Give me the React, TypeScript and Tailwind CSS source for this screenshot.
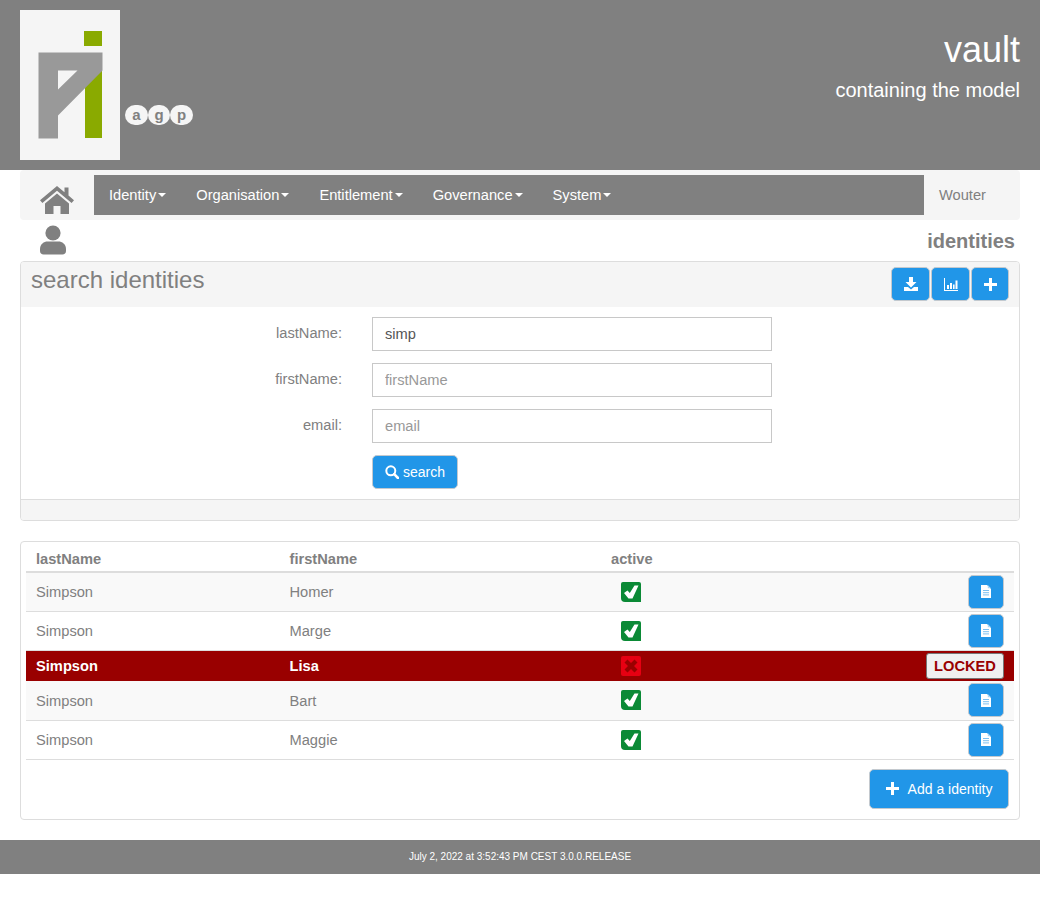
import React from "react";

const blueBtn = "flex items-center justify-center bg-[#2196e8] text-white border border-[#c4c9ce] rounded-[5px]";

const Caret = () => (
  <span className="inline-block ml-[2px] align-middle w-0 h-0 border-x-[4px] border-x-transparent border-t-[4px] border-t-white" />
);

const Home = () => (
  <svg width="34" height="28" viewBox="0 0 34 28" fill="#808080">
    <path d="M17 0 L24.5 6.2 V1.5 H28.5 V9.5 L34 14.2 L31.6 17 L17 4.8 L2.4 17 L0 14.2 Z" />
    <path d="M17 7.5 L29 17.5 V28 H20.5 V20 H13.5 V28 H5 V17.5 Z" />
  </svg>
);

const User = () => (
  <svg width="26" height="30" viewBox="0 0 26 30" fill="#808080">
    <circle cx="13" cy="8" r="7.6" />
    <path d="M0 24 C0 19 4 16.5 7.5 16.5 H18.5 C22 16.5 26 19 26 24 V26 C26 28.2 24.5 29.5 22.5 29.5 H3.5 C1.5 29.5 0 28.2 0 26 Z" />
  </svg>
);

const Doc = () => (
  <svg width="10" height="13" viewBox="0 0 10 13">
    <path d="M0 0 H6 L10 4 V13 H0 Z" fill="#fff" />
    <path d="M6.8 0 L10 3.2 H6.8 Z" fill="#a8d6f6" />
    <path d="M2 5.5 H8 M2 7.7 H8 M2 9.9 H8" stroke="#7cc0f0" strokeWidth="1" />
  </svg>
);

const Check = () => (
  <svg width="20" height="20" viewBox="0 0 20 20">
    <path d="M2 0 H18 Q20 0 20 2 V20 H4 Q0 20 0 16 V2 Q0 0 2 0 Z" fill="#0b8a36" />
    <path d="M3 11 L6.5 8.5 L8.8 11 L13.5 3.5 L17.5 3.5 L11.5 16.5 L7.5 16.5 Z" fill="#fff" />
  </svg>
);

const Cross = () => (
  <svg width="20" height="20" viewBox="0 0 20 20">
    <rect width="20" height="20" rx="2" fill="#e60012" />
    <path d="M3.5 6.5 L6.5 3.5 L10 7 L13.5 3.5 L16.5 6.5 L13 10 L16.5 13.5 L13.5 16.5 L10 13 L6.5 16.5 L3.5 13.5 L7 10 Z" fill="#990000" />
  </svg>
);

const nav = ["Identity", "Organisation", "Entitlement", "Governance", "System"];

const rows = [
  { f: "Homer", s: true },
  { f: "Marge", s: false },
  { f: "Lisa", locked: true },
  { f: "Bart", s: true },
  { f: "Maggie", s: false },
];

const Field = ({ label, value, placeholder }: { label: string; value?: string; placeholder?: string }) => (
  <div className="flex h-[34px] mb-3">
    <label className="w-[321px] text-right text-[#808080] text-[14.667px] leading-[32px]">{label}</label>
    <input
      readOnly
      defaultValue={value}
      placeholder={placeholder}
      className="ml-[30px] w-[400px] h-[34px] border border-[#c8c8c8] px-3 text-[14.667px] text-[#555] placeholder:text-[#999] outline-none bg-white"
    />
  </div>
);

export default function App() {
  return (
    <div className="bg-white min-h-[905px] text-[#808080] font-['Liberation_Sans',Arial,sans-serif] text-[14.667px]">
      <header className="h-[170px] bg-[#808080] flex justify-between pl-5 pr-5 pt-[10px]">
        <div className="flex items-end h-[150px]">
          <div className="w-[100px] h-[150px] bg-[#f5f5f5]">
            <svg width="100" height="150" viewBox="0 0 100 150">
              <rect x="64" y="21" width="18" height="15" fill="#8aaa00" />
              <rect x="65" y="43" width="17" height="85" fill="#8aaa00" />
              <path d="M18.5 42.5 H82.5 V60.5 L38 105.5 V128.5 H18.5 Z M38 60.5 V79.5 L57.5 60.5 Z" fill="#999" fillRule="evenodd" />
            </svg>
          </div>
          <div className="flex ml-[5px] mb-[35px]">
            {["a", "g", "p"].map((c) => (
              <span key={c} className="w-[22.67px] h-5 rounded-full bg-[#f5f5f5] text-[#808080] text-[15px] font-bold leading-5 text-center">{c}</span>
            ))}
          </div>
        </div>
        <div className="text-right text-white">
          <div className="text-[36px] leading-[40px] mt-[20px]">vault</div>
          <div className="text-xl leading-[22px] mt-[9px]">containing the model</div>
        </div>
      </header>

      <main className="px-5">
        <nav className="h-[50px] bg-[#f5f5f5] rounded-[4px] flex items-start">
          <div className="w-[74px] h-[50px] flex items-start justify-center pt-[16px]"><Home /></div>
          <div className="mt-[5px] h-10 w-[830px] bg-[#808080] flex items-center text-white pl-[15px] gap-[30px]">
            {nav.map((n) => (
              <span key={n} className="flex items-center leading-[22px]">{n}<Caret /></span>
            ))}
          </div>
          <div className="ml-[15px] mt-[5px] leading-10">Wouter</div>
        </nav>

        <div className="h-[41px] flex justify-between items-start">
          <div className="ml-[20px] mt-[5px]"><User /></div>
          <div className="text-xl font-bold pr-[5px] mt-[10px] leading-[22px]">identities</div>
        </div>

        <section className="h-[260px] border border-[#ddd] rounded-[4px] overflow-hidden flex flex-col">
          <div className="h-[45px] bg-[#f5f5f5] flex justify-between pl-[10px] pr-[10px] pt-[5px]">
            <h2 className="text-2xl leading-[26px]">search identities</h2>
            <div className="flex gap-px">
              <button className={`${blueBtn} w-[39px] h-[34px]`}>
                <svg width="14" height="14" viewBox="0 0 14 14" fill="#fff"><path d="M5 0 H9 V5 H12.5 L7 10.5 L1.5 5 H5 Z" /><path d="M0 10 H4 L7 12.5 L10 10 H14 V14 H0 Z" /></svg>
              </button>
              <button className={`${blueBtn} w-[39px] h-[34px]`}>
                <svg width="14" height="13" viewBox="0 0 14 13" fill="#fff"><path d="M0 0 H1 V12 H14 V13 H0 Z" /><rect x="3" y="7" width="2" height="4" /><rect x="6" y="5" width="2" height="6" /><rect x="9" y="6.5" width="1.6" height="4.5" /><rect x="11.5" y="2.5" width="2" height="8.5" /></svg>
              </button>
              <button className={`${blueBtn} w-[38px] h-[34px]`}>
                <svg width="13" height="13" viewBox="0 0 13 13" fill="#fff"><path d="M5 0 H8 V5 H13 V8 H8 V13 H5 V8 H0 V5 H5 Z" /></svg>
              </button>
            </div>
          </div>
          <div className="flex-1 pt-[10px]">
            <Field label="lastName:" value="simp" />
            <Field label="firstName:" placeholder="firstName" />
            <Field label="email:" placeholder="email" />
            <div className="pl-[351px]">
              <button className={`${blueBtn} w-[86px] h-[34px] text-sm gap-[4px]`}>
                <svg width="14" height="14" viewBox="0 0 14 14" fill="none" stroke="#fff"><circle cx="5.8" cy="5.8" r="4.5" strokeWidth="2" /><path d="M9.2 9.2 L13 13" strokeWidth="2.6" strokeLinecap="round" /></svg>
                search
              </button>
            </div>
          </div>
          <div className="h-[21px] bg-[#f5f5f5] border-t border-[#ddd]" />
        </section>

        <section className="mt-5 h-[279px] border border-[#ddd] rounded-[4px] px-[5px] pt-[5px]">
          <table className="w-[988px] table-fixed border-collapse">
            <colgroup>
              <col className="w-[253.5px]" />
              <col className="w-[321.5px]" />
              <col className="w-[60px]" />
              <col />
            </colgroup>
            <thead>
              <tr className="h-[25px] border-b-2 border-[#ddd] font-bold text-left">
                <th className="px-[10px]">lastName</th>
                <th className="px-[10px]">firstName</th>
                <th className="px-[10px] whitespace-nowrap">active</th>
                <th />
              </tr>
            </thead>
            <tbody>
              {rows.map((r) =>
                r.locked ? (
                  <tr key={r.f} className="h-[31px] bg-[#990000] text-white font-bold">
                    <td className="px-[10px] pt-px">Simpson</td>
                    <td className="px-[10px] pt-px">{r.f}</td>
                    <td><div className="flex justify-center"><Cross /></div></td>
                    <td className="pr-[10px]">
                      <div className="flex justify-end">
                        <span className="h-[26px] w-[78px] bg-[#f0f0f0] border border-[#777] rounded-[3px] text-[#990000] text-center leading-6">LOCKED</span>
                      </div>
                    </td>
                  </tr>
                ) : (
                  <tr key={r.f} className={`h-[39px] border-b border-[#ddd] ${r.s ? "bg-[#f9f9f9]" : "bg-white"}`}>
                    <td className="px-[10px] pt-px">Simpson</td>
                    <td className="px-[10px] pt-px">{r.f}</td>
                    <td><div className="flex justify-center"><Check /></div></td>
                    <td className="pr-[10px]">
                      <div className="flex justify-end">
                        <button className={`${blueBtn} w-[36px] h-[34px]`}><Doc /></button>
                      </div>
                    </td>
                  </tr>
                )
              )}
            </tbody>
          </table>
          <div className="flex justify-end mt-[9px] pr-[5px]">
            <button className={`${blueBtn} w-[140px] h-[40px] text-sm gap-[9px]`}>
              <svg width="13" height="13" viewBox="0 0 13 13" fill="#fff"><path d="M5 0 H8 V5 H13 V8 H8 V13 H5 V8 H0 V5 H5 Z" /></svg>
              Add a identity
            </button>
          </div>
        </section>
      </main>

      <footer className="mt-5 h-[34px] bg-[#808080] text-white text-[10px] flex items-center justify-center pb-[2px]">
        July 2, 2022 at 3:52:43 PM CEST 3.0.0.RELEASE
      </footer>
    </div>
  );
}
